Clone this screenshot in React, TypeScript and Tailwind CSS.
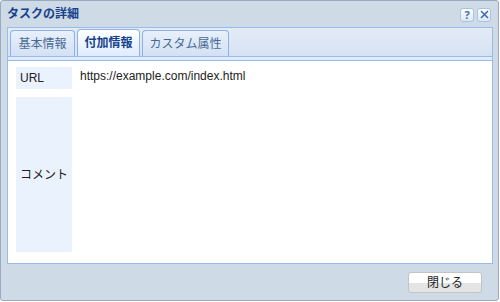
import React from "react";

const font = { fontFamily: '"Noto Sans", "Noto Sans CJK JP", sans-serif' };
const latin = { fontFamily: '"Liberation Sans", "Noto Sans CJK JP", sans-serif' };

export default function App() {
  return (
    <div className="w-[500px] h-[302px] bg-white" style={font}>
      <div className="w-[499px] h-[301px] border border-[#99a9bf] bg-[#cfdae7] rounded-[3px] flex flex-col px-[5px]">
        <div className="h-[26px] flex items-center justify-between">
          <span className="text-[12px] font-bold text-[#15428b] leading-none pl-[1px]">タスクの詳細</span>
          <div className="flex gap-[3px] pr-[2px] pt-[1px]">
            <div className="w-[14px] h-[14px] rounded-[3px] border border-[#a9c3e6] bg-gradient-to-b from-[#ffffff] to-[#dbe7f6] flex items-center justify-center text-[11px] font-bold text-[#3f6ea6] leading-none">?</div>
            <div className="w-[14px] h-[14px] rounded-[3px] border border-[#a9c3e6] bg-gradient-to-b from-[#ffffff] to-[#dbe7f6] flex items-center justify-center">
              <svg width="9" height="9" viewBox="0 0 9 9">
                <path d="M1 1L8 8M8 1L1 8" stroke="#3f6ea6" strokeWidth="1.6" />
              </svg>
            </div>
          </div>
        </div>
        <div className="w-[486px] ml-[1px] border border-[#99bbe8] bg-gradient-to-b from-[#e3ebf6] to-[#d6e2f3] h-[30px] flex items-end gap-[2px] pl-[2px]">
          <div className="h-[26px] w-[65px] rounded-t-[4px] border border-b-0 border-[#8db2e3] bg-gradient-to-b from-[#e8f0fb] to-[#d3e1f4] flex items-center justify-center text-[12px] text-[#4a6a94]">基本情報</div>
          <div className="h-[27px] w-[63px] rounded-t-[4px] border border-b-0 border-[#8db2e3] bg-gradient-to-b from-[#ffffff] to-[#deecfd] flex items-center justify-center text-[12px] font-bold text-[#15428b]">付加情報</div>
          <div className="h-[26px] w-[87px] rounded-t-[4px] border border-b-0 border-[#8db2e3] bg-gradient-to-b from-[#e8f0fb] to-[#d3e1f4] flex items-center justify-center text-[12px] text-[#4a6a94]">カスタム属性</div>
        </div>
        <div className="w-[486px] ml-[1px] h-[3px] bg-[#deecfd] border-x border-[#99bbe8]"></div>
        <div className="w-[486px] ml-[1px] h-[204px] bg-white border border-[#99bbe8] flex flex-col gap-[8px] pt-[6px] pl-[8px]">
          <div className="flex gap-[8px] items-stretch">
            <div className="w-[56px] h-[22px] bg-[#eaf2fd] flex items-center pl-[4px] text-[12px] text-[#222]" style={latin}>URL</div>
            <div className="text-[12px] text-[#222] leading-none pt-[3px]" style={latin}>https://example.com/index.html</div>
          </div>
          <div className="flex gap-[8px]">
            <div className="w-[56px] h-[155px] bg-[#eaf2fd] flex items-center pl-[4px] text-[12px] text-[#222]">コメント</div>
          </div>
        </div>
        <div className="flex-1 flex items-center justify-end pr-[11px]">
          <div className="w-[74px] h-[21px] rounded-[3px] border border-[#c4c4c4] bg-gradient-to-b from-[#ffffff] from-50% to-[#e4e4e4] to-50% flex items-center justify-center text-[12px] text-[#222] mt-[1px]">閉じる</div>
        </div>
      </div>
    </div>
  );
}
